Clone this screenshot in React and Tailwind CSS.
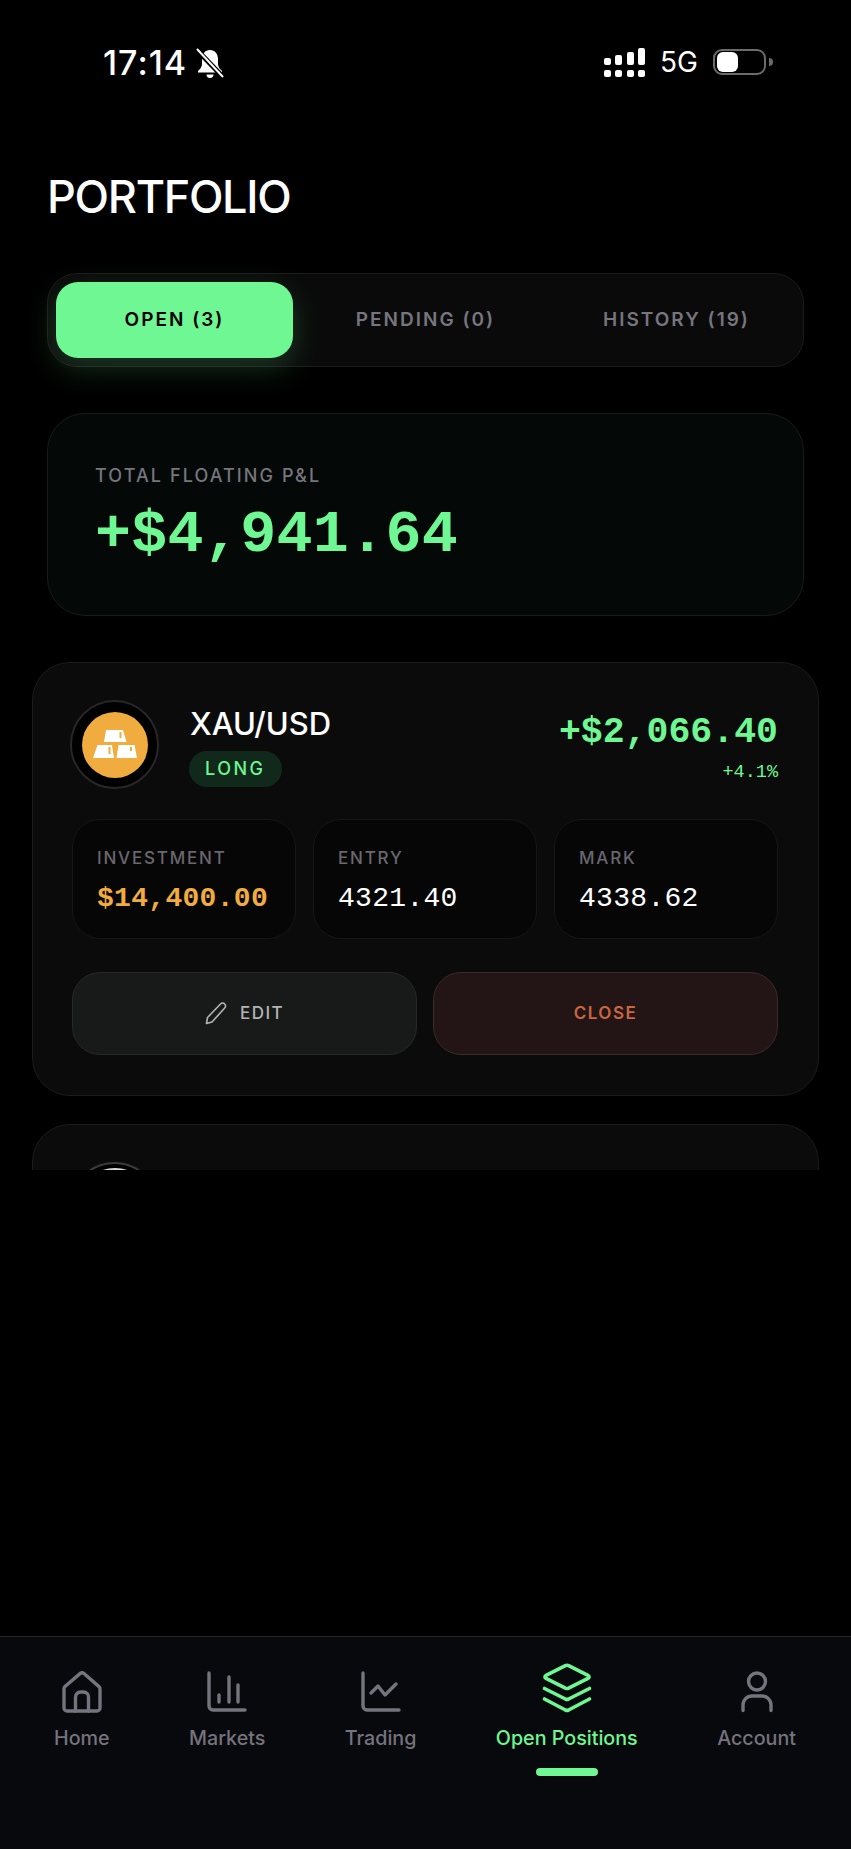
import React from "react";

const MONO = "font-['Liberation_Mono','DejaVu_Sans_Mono',monospace]";

const stats = [
  { label: "INVESTMENT", value: "$14,400.00", tone: "font-bold text-[#f0ac3e]" },
  { label: "ENTRY", value: "4321.40", tone: "text-white" },
  { label: "MARK", value: "4338.62", tone: "text-white" },
];

const tabs = [
  { label: "OPEN (3)", active: true },
  { label: "PENDING (0)" },
  { label: "HISTORY (19)" },
];

const HomeIcon = () => (
  <svg width="40" height="42" viewBox="0 0 40 42" fill="none" stroke="currentColor" strokeWidth="3.4" strokeLinecap="round" strokeLinejoin="round">
    <path d="M2 18 a3 3 0 0 1 1-2.4 L18 2.6 a3 3 0 0 1 4 0 L37 15.6 a3 3 0 0 1 1 2.4 V37 a3 3 0 0 1-3 3 H5 a3 3 0 0 1-3-3 Z" />
    <path d="M13.5 40 V26 a5 5 0 0 1 5-5 h3 a5 5 0 0 1 5 5 V40" />
  </svg>
);

const BarsIcon = () => (
  <svg width="40" height="42" viewBox="0 0 40 42" fill="none" stroke="currentColor" strokeWidth="3.4" strokeLinecap="round" strokeLinejoin="round">
    <path d="M2 2 V35 a4 4 0 0 0 4 4 H38" />
    <path d="M12 24 V31" />
    <path d="M22 6 V31" />
    <path d="M31 14 V31" />
  </svg>
);

const LineIcon = () => (
  <svg width="40" height="42" viewBox="0 0 40 42" fill="none" stroke="currentColor" strokeWidth="3.4" strokeLinecap="round" strokeLinejoin="round">
    <path d="M2 2 V35 a4 4 0 0 0 4 4 H38" />
    <path d="M10 22 L17 15 L24 24 L35 13" />
  </svg>
);

const StackIcon = () => (
  <svg width="50" height="50" viewBox="0 0 50 50" fill="none" stroke="currentColor" strokeWidth="3.6" strokeLinecap="round" strokeLinejoin="round">
    <path d="M23.4 2.6 a4 4 0 0 1 3.2 0 L46 12.4 a1.6 1.6 0 0 1 0 3 L26.6 25.2 a4 4 0 0 1-3.2 0 L4 15.4 a1.6 1.6 0 0 1 0-3 Z" />
    <path d="M2.5 25.5 L23.4 36 a4 4 0 0 0 3.2 0 L47.5 25.5" />
    <path d="M2.5 36 L23.4 47 a4 4 0 0 0 3.2 0 L47.5 36" />
  </svg>
);

const UserIcon = () => (
  <svg width="32" height="42" viewBox="0 0 32 42" fill="none" stroke="currentColor" strokeWidth="3.4" strokeLinecap="round" strokeLinejoin="round">
    <circle cx="16" cy="10.5" r="8.5" />
    <path d="M2 39.5 V34 a9 9 0 0 1 9-9 h10 a9 9 0 0 1 9 9 V39.5" />
  </svg>
);

const navItems = [
  { label: "Home", icon: <HomeIcon /> },
  { label: "Markets", icon: <BarsIcon /> },
  { label: "Trading", icon: <LineIcon /> },
  { label: "Open Positions", icon: <StackIcon />, active: true },
  { label: "Account", icon: <UserIcon /> },
];

const GoldBars = () => (
  <svg width="44" height="29" viewBox="0 0 44 29" fill="#fff">
    <path d="M13 0 H30 L33.500 12 H11 Z" />
    <path d="M4.500 15 H19 L21 28 H0 Z" />
    <path d="M25.500 15 H41.500 L44 28 H23.500 Z" />
    <path d="M26.500 2 h2 v6 h-2 Z" fill="#f0ac3e" />
    <path d="M15.500 17 h2 v7 h-2 Z" fill="#f0ac3e" />
    <path d="M37 17 h2 v4 h-2 Z" fill="#f0ac3e" />
  </svg>
);

const StatusBar = () => (
  <div className="flex h-[90px] items-start justify-between pl-[103px] pr-[78px] pt-[47px] text-white">
    <div className="flex items-center gap-[9px]">
      <span className="font-['Inter',sans-serif] text-[34px] leading-[32px] font-medium tracking-[1px]">17:14</span>
      <svg width="28" height="31" viewBox="0 0 28 31" fill="#fff">
        <path d="M14 2 c-5 0 -8 4 -8 9 v5 c0 3 -2 5 -4 7 v1.500 h24 v-1.500 c-2 -2 -4 -4 -4 -7 v-5 c0 -5 -3 -9 -8 -9 Z" />
        <path d="M10.500 26.500 h7 a3.500 3.500 0 0 1 -7 0 Z" />
        <path d="M1 2 L26 28" stroke="#000" strokeWidth="5" />
        <path d="M1 1 L27 29" stroke="#fff" strokeWidth="2" />
      </svg>
    </div>
    <div className="flex items-center gap-[15px]">
      <div className="flex items-end gap-[4.500px]">
        {[7, 10, 13, 17].map((h) => (
          <div key={h} className="flex w-[7px] flex-col gap-[5px]">
            <div className="rounded-[2px] bg-white" style={{ height: h }} />
            <div className="h-[7px] rounded-[2px] bg-white" />
          </div>
        ))}
      </div>
      <span className="font-['Inter',sans-serif] text-[28px] leading-[30px] font-normal">5G</span>
      <div className="flex items-center gap-[3px]">
        <div className="flex h-[26px] w-[53px] items-center rounded-[9px] border-2 border-[#6b6b6b] px-[2px]">
          <div className="h-[20px] w-[21px] rounded-[6px] bg-white" />
        </div>
        <div className="h-[8px] w-[4px] rounded-r-full bg-[#6b6b6b]" />
      </div>
    </div>
  </div>
);

const TabBar = () => (
  <div className="mx-[47px] mt-[49px] flex h-[94px] gap-[14px] rounded-[30px] border border-[#1c1c1c] bg-[#0a0a0a] p-[8px]">
    {tabs.map((t) => (
      <div
        key={t.label}
        className={
          t.active
            ? "flex flex-1 items-center justify-center rounded-[22px] bg-[#6ef792] pt-[1px] font-['Inter',sans-serif] text-[19px] font-semibold tracking-[2px] text-black shadow-[0_10px_30px_rgba(110,247,146,0.2)]"
            : "flex flex-1 items-center justify-center pt-[1px] font-['Inter',sans-serif] text-[19px] font-semibold tracking-[2px] text-[#77757d]"
        }
      >
        {t.label}
      </div>
    ))}
  </div>
);

const TotalCard = () => (
  <div className="mx-[47px] mt-[46px] h-[203px] rounded-[38px] border border-[#181c1a] bg-[#040807] px-[47px] pt-[50px]">
    <p className="font-['Inter',sans-serif] text-[18px] leading-[24px] font-medium tracking-[2.100px] text-[#77757d]">TOTAL FLOATING P&amp;L</p>
    <p className={`${MONO} mt-[13px] text-[60px] leading-[68px] font-bold tracking-[0.300px] text-[#6ef792]`}>+$4,941.64</p>
  </div>
);

const PositionCard = () => (
  <div className="rounded-[38px] border border-[#1b1b1b] bg-[#0b0b0b] pt-[37px] pr-[40px] pb-[40px] pl-[39px]">
    <div className="flex items-start justify-between">
      <div className="flex gap-[32px]">
        <div className="-ml-[2px] flex h-[89px] w-[89px] items-center justify-center rounded-full border-2 border-[#2a2528] bg-black">
          <div className="flex h-[66px] w-[66px] items-center justify-center rounded-full bg-[#f0ac3e]">
            <GoldBars />
          </div>
        </div>
        <div className="flex flex-col items-start">
          <p className="mt-[6px] -ml-[1px] font-['Inter',sans-serif] text-[31px] leading-[36px] font-medium text-white">XAU/USD</p>
          <span className="mt-[9px] -ml-[2px] rounded-full bg-[#10291a] px-[16px] font-['Inter',sans-serif] text-[18px] leading-[36px] font-medium tracking-[2.500px] text-[#6ef792]">LONG</span>
        </div>
      </div>
      <div className="flex flex-col items-end">
        <p className={`${MONO} mt-[13px] text-[36.500px] leading-[40px] font-bold text-[#6ef792]`}>+$2,066.40</p>
        <p className={`${MONO} mt-[8px] text-[18.500px] leading-[24px] text-[#6ef792]`}>+4.1%</p>
      </div>
    </div>
    <div className="mt-[30px] grid grid-cols-3 gap-[17px]">
      {stats.map((s) => (
        <div key={s.label} className="h-[120px] rounded-[28px] border border-[#161616] bg-[#060606] px-[24px] pt-[26px]">
          <p className="font-['Inter',sans-serif] text-[17px] leading-[24px] font-medium tracking-[1.800px] text-[#69676f]">{s.label}</p>
          <p className={`${MONO} mt-[11px] text-[28px] leading-[36px] tracking-[0.300px] ${s.tone}`}>{s.value}</p>
        </div>
      ))}
    </div>
    <div className="mt-[33px] grid grid-cols-2 gap-[16px]">
      <button className="flex h-[83px] items-center justify-center gap-[13px] rounded-[28px] border border-[#2a2729] bg-[#181a1a] font-['Inter',sans-serif] text-[17px] font-medium tracking-[1.500px] text-[#b4b4b4]">
        <svg width="22" height="23" viewBox="0 0 22 23" fill="none" stroke="#b4b4b4" strokeWidth="1.600" strokeLinejoin="round">
          <path d="M1.500 21.500 L2.500 15.500 L15.500 2 a2.800 2.800 0 0 1 4.200 0 a2.800 2.800 0 0 1 0 4 L7 20 Z" />
        </svg>
        EDIT
      </button>
      <button className="flex h-[83px] items-center justify-center rounded-[28px] border border-[#3a2a2c] bg-[#231416] font-['Inter',sans-serif] text-[17px] font-semibold tracking-[1.500px] text-[#c9673f]">
        CLOSE
      </button>
    </div>
  </div>
);

const SecondCardPeek = () => (
  <div className="mt-[28px] rounded-[38px] border border-[#1b1b1b] bg-[#0b0b0b] pt-[37px] pr-[40px] pb-[40px] pl-[39px]">
    <div className="-ml-[2px] flex h-[89px] w-[89px] items-center justify-center rounded-full border-2 border-[#3a3a3a] bg-black">
      <div className="h-[78px] w-[78px] rounded-full bg-[#dcdcdc]" />
    </div>
  </div>
);

const BottomNav = () => (
  <nav className="flex h-[213px] items-start justify-between border-t border-[#2a2428] bg-[#08090c] pt-[26px] pr-[55px] pl-[54px]">
    {navItems.map((item) => (
      <div key={item.label} className={`flex flex-col items-center ${item.active ? "text-[#6ef792]" : "text-[#75737d]"}`}>
        <div className="flex h-[50px] items-end">{item.icon}</div>
        <span className="mt-[11px] font-['Inter',sans-serif] text-[19.700px] leading-[28px] font-medium whitespace-nowrap">{item.label}</span>
        {item.active && <div className="mt-[16px] h-[8px] w-[62px] rounded-full bg-[#6ef792]" />}
      </div>
    ))}
  </nav>
);

export default function App() {
  return (
    <div className="flex h-[1849px] w-[851px] flex-col overflow-hidden bg-black">
      <StatusBar />
      <h1 className="mt-[80px] pl-[47px] font-['Inter',sans-serif] text-[45px] leading-[54px] font-medium tracking-[-1.300px] text-white">PORTFOLIO</h1>
      <TabBar />
      <TotalCard />
      <div className="mt-[46px] h-[508px] overflow-hidden px-[32px]">
        <PositionCard />
        <SecondCardPeek />
      </div>
      <div className="flex-1" />
      <BottomNav />
    </div>
  );
}
